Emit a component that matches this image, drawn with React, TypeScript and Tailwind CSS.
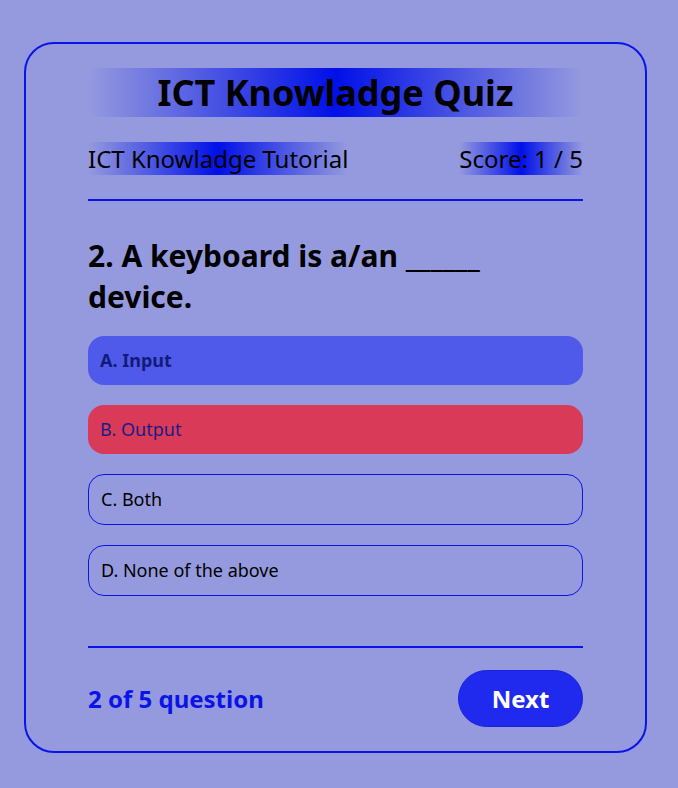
const OPTIONS = [
  { label: "A. Input", state: "correct" },
  { label: "B. Output", state: "wrong" },
  { label: "C. Both", state: "idle" },
  { label: "D. None of the above", state: "idle" },
];

export default function App() {
  return (
    <div className="min-h-screen bg-[#959ade] px-[24px] pt-[42px] font-['Noto_Sans',sans-serif]">
      <div className="w-[623px] h-[711px] rounded-[30px] border-2 border-[#0a14e6] px-[62px] pt-[24px] pb-[24px] flex flex-col">
        {/* Header */}
        <h1 className="h-[49px] flex items-center justify-center rounded-[10px] bg-linear-to-r from-transparent via-[#0010e8] to-transparent text-[36px] font-bold text-black">
          ICT Knowladge Quiz
        </h1>

        <div className="mt-[25px] flex items-center justify-between text-[24px] text-black">
          <span className="h-[33px] flex items-center bg-linear-to-r from-transparent via-[#0010e8] to-transparent">
            ICT Knowladge Tutorial
          </span>
          <span className="h-[33px] flex items-center bg-linear-to-r from-transparent via-[#0010e8] to-transparent">
            Score: 1 / 5
          </span>
        </div>

        <div className="mt-[24px] h-[2px] bg-[#0a14e6]" />

        {/* Question */}
        <h2 className="mt-[34px] text-[30px] leading-[41px] font-bold text-black pr-[60px]">
          2. A keyboard is a/an ______ device.
        </h2>

        <ul className="mt-[19px] flex flex-col gap-[20px]">
          {OPTIONS.map((o) => (
            <li
              key={o.label}
              className={
                o.state === "correct"
                  ? "h-[49px] flex items-center rounded-[16px] bg-[#4f5aea] px-[12px] text-[18px] font-bold text-[#141a7a]"
                  : o.state === "wrong"
                  ? "h-[49px] flex items-center rounded-[16px] bg-[#d93a58] px-[12px] text-[18px] text-[#1a1d86]"
                  : "h-[51px] flex items-center rounded-[16px] border border-[#0a14e6] px-[12px] text-[18px] text-black"
              }
            >
              {o.label}
            </li>
          ))}
        </ul>

        <div className="mt-auto h-[2px] bg-[#0a14e6]" />

        {/* Footer */}
        <div className="mt-[22px] flex items-center justify-between">
          <span className="text-[24px] font-bold text-[#0a14e6]">2 of 5 question</span>
          <button className="h-[57px] w-[125px] rounded-full border border-[#1a22d8] bg-[#2029ee] text-[24px] font-bold text-white">
            Next
          </button>
        </div>
      </div>
    </div>
  );
}
